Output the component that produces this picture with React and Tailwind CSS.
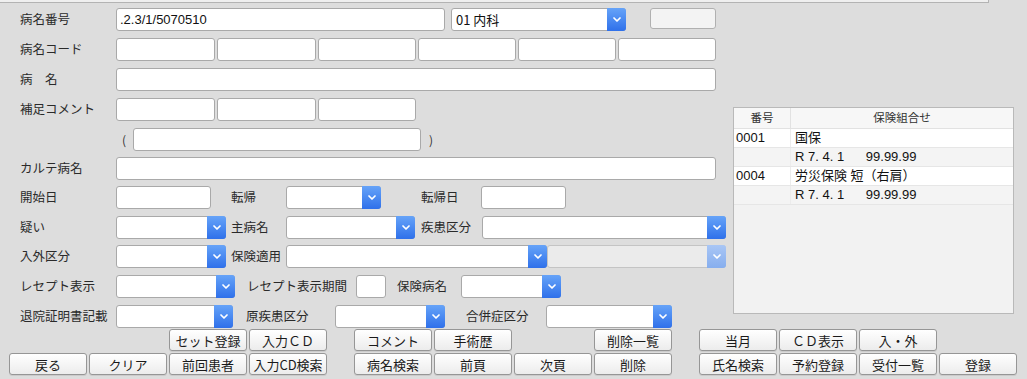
import React from "react";

const JP = { fontFamily: '"Noto Sans CJK JP", "Noto Sans", sans-serif' };
const AR = { fontFamily: '"Liberation Sans", "Noto Sans CJK JP", sans-serif' };

function Chevron() {
  return (
    <svg width="8" height="5" viewBox="0 0 8 5" fill="none">
      <path d="M1 1 L4 4 L7 1" stroke="white" strokeWidth="1.7" strokeLinecap="round" strokeLinejoin="round" />
    </svg>
  );
}

function Input({ w, value = "" }) {
  return (
    <div
      className={`${w} h-[23px] shrink-0 bg-white border border-[#a9a9a9] rounded-[3px] flex items-center px-[3px] text-[13px] text-[#111]`}
      style={AR}
    >
      {value}
    </div>
  );
}

function Select({ w, value = "", disabled = false }) {
  return (
    <div
      className={`${w} h-[23px] shrink-0 flex rounded-[3px] border ${disabled ? "border-[#c4c4c4] bg-[#ebebeb]" : "border-[#a9a9a9] bg-white"}`}
    >
      <div className="flex-1 flex items-center px-[4px] text-[13px] text-[#111]" style={JP}>
        {value}
      </div>
      <div
        className={`w-[19px] -my-px -mr-px rounded-r-[3px] flex items-center justify-center ${disabled ? "bg-gradient-to-b from-[#a9c6f5] to-[#86aeee]" : "bg-gradient-to-b from-[#66a3f8] to-[#2f70ea]"}`}
      >
        <Chevron />
      </div>
    </div>
  );
}

function Label({ w, children, ml = "" }) {
  return (
    <div className={`${w} ${ml} shrink-0 text-[12.5px] text-[#2a2a2a] leading-none`} style={JP}>
      {children}
    </div>
  );
}

function Row({ mt, children }) {
  return <div className={`flex items-center h-[23px] ${mt}`}>{children}</div>;
}

function Btn({ label }) {
  if (!label) return <div className="w-[78px] h-[22px] shrink-0" />;
  return (
    <div
      className="w-[78px] h-[22px] shrink-0 flex items-center justify-center rounded-[3px] border border-[#969696] bg-gradient-to-b from-white to-[#ececec] text-[13px] text-[#1a1a1a] leading-none shadow-[0_1px_0_rgba(0,0,0,0.08)]"
      style={JP}
    >
      {label}
    </div>
  );
}

function BtnGroup({ items }) {
  return (
    <div className="flex gap-[2px]">
      {items.map((t, i) => (
        <Btn key={i} label={t} />
      ))}
    </div>
  );
}

const rows = [
  { no: "0001", text: "国保" },
  { no: "", text: "R 7. 4. 1      99.99.99" },
  { no: "0004", text: "労災保険 短（右肩）" },
  { no: "", text: "R 7. 4. 1      99.99.99" },
];

export default function App() {
  return (
    <div className="w-[1027px] h-[379px] bg-[#dddddd] overflow-hidden">
      <div className="w-[989px] h-[3px] bg-[#efefef] border-b border-r border-[#b3b3b3]" />

      <div className="flex">
        <div className="w-[727px] pl-[20px] shrink-0">
          <Row mt="mt-[5px]">
            <Label w="w-[96px]">病名番号</Label>
            <Input w="w-[329px]" value=".2.3/1/5070510" />
            <div className="w-[6px]" />
            <Select w="w-[175px]" value="01 内科" />
            <div className="w-[24px]" />
            <div className="w-[66px] h-[21px] -mt-[2px] rounded-[3px] border border-[#b0b0b0] bg-[#f3f3f3]" />
          </Row>

          <Row mt="mt-[7px]">
            <Label w="w-[96px]">病名コード</Label>
            <div className="flex gap-[2px]">
              <Input w="w-[99px]" />
              <Input w="w-[99px]" />
              <Input w="w-[98px]" />
              <Input w="w-[98px]" />
              <Input w="w-[98px]" />
              <Input w="w-[98px]" />
            </div>
          </Row>

          <Row mt="mt-[7px]">
            <Label w="w-[96px]">病　名</Label>
            <Input w="w-[600px]" />
          </Row>

          <Row mt="mt-[7px]">
            <Label w="w-[96px]">補足コメント</Label>
            <div className="flex gap-[2px]">
              <Input w="w-[99px]" />
              <Input w="w-[99px]" />
              <Input w="w-[98px]" />
            </div>
          </Row>

          <Row mt="mt-[7px]">
            <div className="w-[102px] shrink-0" />
            <div className="w-[11px] text-[12px] text-[#333]" style={JP}>(</div>
            <Input w="w-[288px]" />
            <div className="ml-[8px] text-[12px] text-[#333]" style={JP}>)</div>
          </Row>

          <Row mt="mt-[6px]">
            <Label w="w-[96px]">カルテ病名</Label>
            <Input w="w-[600px]" />
          </Row>

          <Row mt="mt-[6px]">
            <Label w="w-[96px]">開始日</Label>
            <Input w="w-[95px]" />
            <Label w="w-[55px]" ml="ml-[20px]">転帰</Label>
            <Select w="w-[95px]" />
            <Label w="w-[60px]" ml="ml-[40px]">転帰日</Label>
            <Input w="w-[85px]" />
          </Row>

          <Row mt="mt-[7px]">
            <Label w="w-[96px]">疑い</Label>
            <Select w="w-[110px]" />
            <Label w="w-[55px]" ml="ml-[5px]">主病名</Label>
            <Select w="w-[129px]" />
            <Label w="w-[61px]" ml="ml-[6px]">疾患区分</Label>
            <Select w="w-[244px]" />
          </Row>

          <Row mt="mt-[6px]">
            <Label w="w-[96px]">入外区分</Label>
            <Select w="w-[110px]" />
            <Label w="w-[55px]" ml="ml-[5px]">保険適用</Label>
            <Select w="w-[261px]" />
            <Select w="w-[179px]" disabled />
          </Row>

          <Row mt="mt-[7px]">
            <Label w="w-[96px]">レセプト表示</Label>
            <Select w="w-[119px]" />
            <Label w="w-[109px]" ml="ml-[12px]">レセプト表示期間</Label>
            <Input w="w-[30px]" />
            <Label w="w-[64px]" ml="ml-[11px]">保険病名</Label>
            <Select w="w-[100px]" />
          </Row>

          <Row mt="mt-[7px]">
            <Label w="w-[96px]">退院証明書記載</Label>
            <Select w="w-[117px]" />
            <Label w="w-[89px]" ml="ml-[13px]">原疾患区分</Label>
            <Select w="w-[110px]" />
            <Label w="w-[80px]" ml="ml-[21px]">合併症区分</Label>
            <Select w="w-[126px]" />
          </Row>
        </div>

        <div className="ml-[6px] mt-[104px] w-[281px] h-[207px] shrink-0 border border-[#b9b9b9] bg-[#f2f2f2]">
          <div className="flex h-[21px] bg-[#f7f7f7] border-b border-[#e2e2e2] text-[11.5px] text-[#333]" style={JP}>
            <div className="w-[57px] flex items-center justify-center border-r border-[#e2e2e2]">番号</div>
            <div className="flex-1 flex items-center justify-center">保険組合せ</div>
          </div>
          {rows.map((r, i) => (
            <div
              key={i}
              className={`flex h-[19px] border-b border-[#e6e6e6] text-[13px] text-[#111] ${i % 2 === 0 ? "bg-white" : "bg-[#f4f4f4]"}`}
            >
              <div className="w-[57px] flex items-center pl-[2px] border-r border-[#ececec]" style={AR}>
                {r.no}
              </div>
              <div className="flex-1 flex items-center pl-[4px] whitespace-pre" style={AR}>
                {r.text}
              </div>
            </div>
          ))}
        </div>
      </div>

      <div className="flex gap-[27px] pl-[9px] mt-[1px]">
        <BtnGroup items={["", "", "セット登録", "入力ＣＤ"]} />
        <BtnGroup items={["コメント", "手術歴", "", "削除一覧"]} />
        <BtnGroup items={["当月", "ＣＤ表示", "入・外", ""]} />
      </div>
      <div className="flex gap-[27px] pl-[9px] mt-[2px]">
        <BtnGroup items={["戻る", "クリア", "前回患者", "入力CD検索"]} />
        <BtnGroup items={["病名検索", "前頁", "次頁", "削除"]} />
        <BtnGroup items={["氏名検索", "予約登録", "受付一覧", "登録"]} />
      </div>
    </div>
  );
}
